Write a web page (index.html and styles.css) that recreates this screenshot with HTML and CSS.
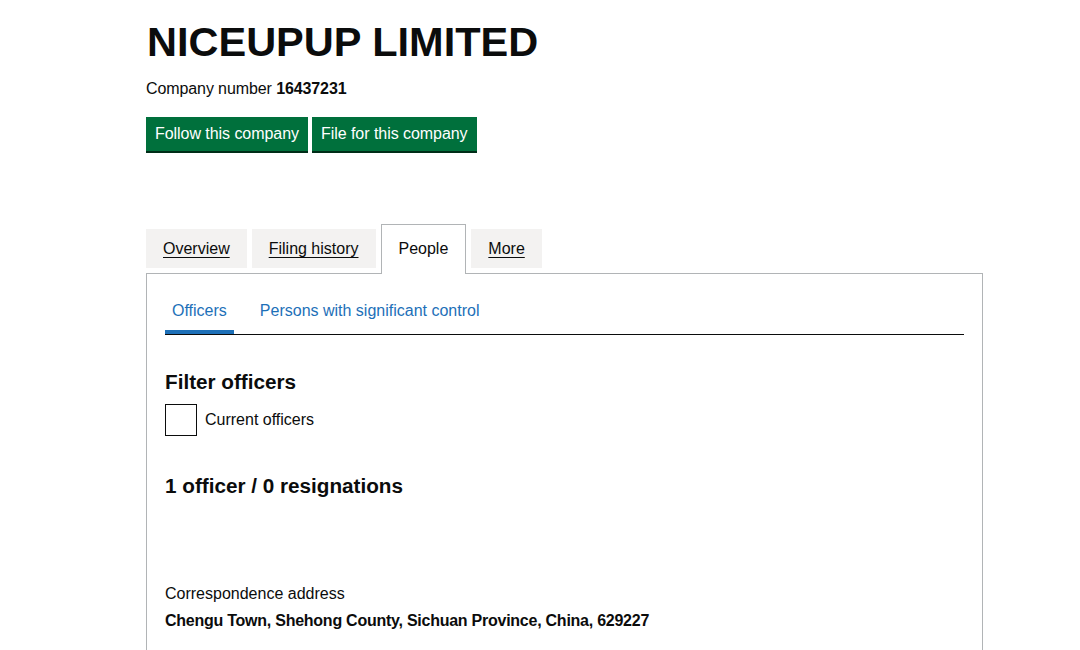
FILE: index.html
```html
<!DOCTYPE html>
<html lang="en">
<head>
<meta charset="utf-8">
<title>NICEUPUP LIMITED - People</title>
<link rel="stylesheet" href="styles.css">
</head>
<body>
<main class="page">
  <h1 class="company-name">NICEUPUP LIMITED</h1>
  <p class="company-number">Company number <strong>16437231</strong></p>
  <div class="actions">
    <a class="button" href="#">Follow this company</a>
    <a class="button" href="#">File for this company</a>
  </div>

  <nav class="tabs">
    <a class="tab" href="#">Overview</a>
    <a class="tab" href="#">Filing history</a>
    <span class="tab tab-active">People</span>
    <a class="tab" href="#">More</a>
  </nav>

  <section class="panel">
    <ul class="subtabs">
      <li class="subtab subtab-active"><a href="#">Officers</a></li>
      <li class="subtab"><a href="#">Persons with significant control</a></li>
    </ul>

    <h2 class="heading filter-heading">Filter officers</h2>
    <label class="checkbox">
      <span class="checkbox-box"></span>
      <span class="checkbox-label">Current officers</span>
    </label>

    <h2 class="heading count-heading">1 officer / 0 resignations</h2>

    <div class="officer">
      <p class="field-label">Correspondence address</p>
      <p class="field-value">Chengu Town, Shehong County, Sichuan Province, China, 629227</p>
    </div>
  </section>
</main>
</body>
</html>
```

FILE: styles.css
```css
html, body {
  margin: 0;
  padding: 0;
  background: #ffffff;
}

body {
  font-family: "Liberation Sans", Arial, sans-serif;
  color: #0b0c0c;
  font-size: 16px;
  line-height: 20px;
}

.page {
  margin-left: 146px;
  width: 837px;
}

.company-name {
  margin: 19px 0 0 1px;
  font-family: "Liberation Sans", Arial, sans-serif;
  font-weight: 700;
  font-size: 41.5px;
  line-height: 46px;
  letter-spacing: 0;
}

.company-number {
  margin: 14px 0 0;
  font-size: 16px;
  line-height: 20px;
  letter-spacing: -0.1px;
}

.company-number strong {
  font-weight: 700;
}

.actions {
  display: flex;
  gap: 4px;
  margin-top: 18px;
}

.button {
  display: block;
  height: 34px;
  line-height: 34px;
  padding: 0 9px;
  background: #00703c;
  color: #ffffff;
  text-decoration: none;
  box-shadow: 0 2px 0 #002d18;
  font-size: 16px;
  letter-spacing: -0.05px;
}

.tabs {
  display: flex;
  align-items: flex-start;
  gap: 5px;
  margin-top: 73px;
}

.tab {
  display: block;
  box-sizing: border-box;
  height: 39px;
  margin-top: 5px;
  padding: 0 17px;
  line-height: 39px;
  background: #f3f2f1;
  color: #0b0c0c;
  text-decoration: underline;
  text-underline-offset: 3px;
  text-decoration-thickness: 1px;
}

.tab-active {
  position: relative;
  z-index: 1;
  height: 50px;
  margin-top: 0;
  padding: 0 17px;
  line-height: 48px;
  background: #ffffff;
  border: 1px solid #b1b4b6;
  border-bottom: 0;
  text-decoration: none;
}

.panel {
  box-sizing: border-box;
  width: 837px;
  height: 390px;
  margin-top: -1px;
  padding: 20px 18px 0 18px;
  border: 1px solid #b1b4b6;
  border-bottom: 0;
}

.subtabs {
  display: flex;
  gap: 19px;
  margin: 0;
  padding: 0;
  list-style: none;
  border-bottom: 1px solid #0b0c0c;
}

.subtab {
  padding: 7px 7px 9px;
  border-bottom: 4px solid transparent;
}

.subtab a {
  color: #1d70b8;
  text-decoration: none;
}

.subtab-active {
  border-bottom-color: #1d70b8;
}

.heading {
  margin: 0;
  font-weight: 700;
  font-size: 20.7px;
  line-height: 25px;
}

.filter-heading {
  margin-top: 33.5px;
}

.checkbox {
  display: flex;
  align-items: center;
  gap: 8px;
  margin-top: 10.5px;
}

.checkbox-box {
  box-sizing: border-box;
  width: 32px;
  height: 32px;
  border: 1px solid #0b0c0c;
}

.count-heading {
  margin-top: 36.5px;
}

.officer {
  margin-top: 86.5px;
}

.field-label {
  margin: 0;
}

.field-value {
  margin: 7px 0 0;
  font-weight: 700;
  letter-spacing: -0.25px;
}
```
